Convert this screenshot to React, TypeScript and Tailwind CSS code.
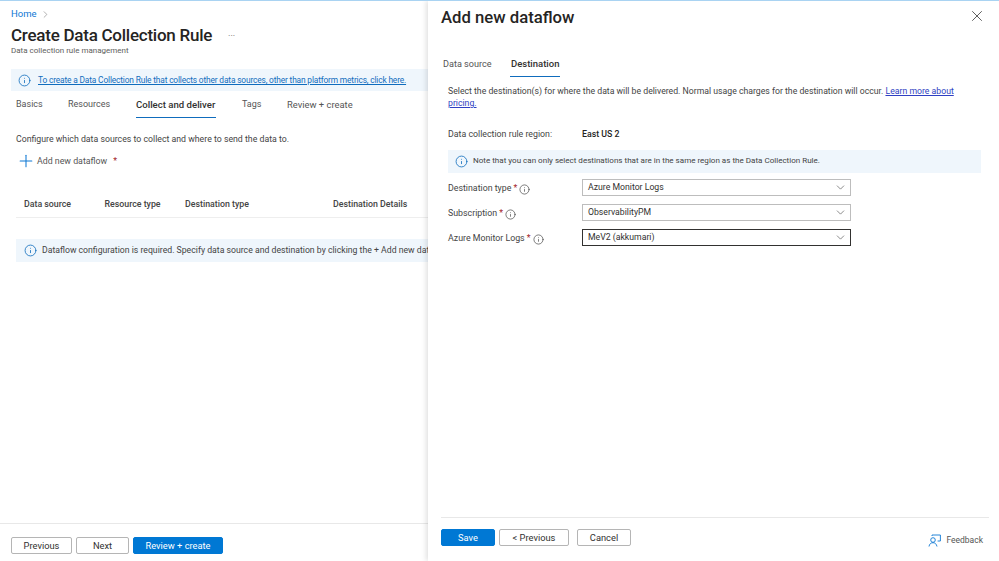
import { ChevronDown, ChevronRight, Info, Plus, X } from "lucide-react";

const fontStack = "font-['Roboto','Noto_Sans',sans-serif]";

const InfoIcon = ({ small }: { small?: boolean }) => (
	<Info
		className={small ? "size-[11px] shrink-0 text-[#444]" : "size-[13px] shrink-0 text-[#0f6cbd]"}
		strokeWidth={1.5}
	/>
);

const Req = () => <span className="text-[#a4262c]">*</span>;

const Btn = ({ label, w, primary }: { label: string; w: string; primary?: boolean }) => (
	<div
		className={`${w} h-[17px] flex items-center justify-center rounded-[2px] text-[9.3px] ${
			primary
				? "bg-[#0078d4] text-white border border-[#0078d4]"
				: "bg-white text-[#323130] border border-[#b5b5b5]"
		}`}
	>
		{label}
	</div>
);

const DropRow = ({ label, value, focused }: { label: string; value: string; focused?: boolean }) => (
	<div className="flex items-center h-[25px]">
		<div className="w-[141px] pl-[7px] flex items-center gap-[2px] text-[8.8px] text-[#444] pt-[3px]">
			<span className="whitespace-nowrap">
				{label} <Req />
			</span>
			<InfoIcon small />
		</div>
		<div
			className={`w-[269px] h-[17px] flex items-center justify-between pl-[5px] pr-[3px] text-[8.7px] text-[#323130] bg-white ${
				focused ? "border border-[#323130]" : "border border-[#bdbdbd]"
			}`}
		>
			<span>{value}</span>
			<ChevronDown className="size-[13px] text-[#555]" strokeWidth={1.25} />
		</div>
	</div>
);

export default function App() {
	return (
		<div className={`${fontStack} w-[999px] h-[561px] overflow-hidden bg-white flex border-t border-[#a9d3f2] text-[#323130]`}>
			{/* left page */}
			<div className="w-[428px] shrink-0 flex flex-col h-full">
				<div className="flex-1 min-h-0 overflow-hidden">
					<div className="pl-[11px] pt-[7px] flex items-center gap-[3px] text-[9.5px] text-[#0f78d4] h-[19px]">
						Home
						<ChevronRight className="size-[11px] text-[#777]" strokeWidth={1.25} />
					</div>
					<div className="pl-[11px] mt-[5px] flex items-center h-[21px]">
						<h1 className="text-[17px] tracking-[-0.25px] font-medium text-[#252423] whitespace-nowrap">Create Data Collection Rule</h1>
						<span className="ml-[16px] mt-[3px] text-[9px] text-[#666]">···</span>
					</div>
					<p className="pl-[11px] text-[8px] text-[#605e5c] leading-[12px] mt-[-1px]">Data collection rule management</p>
					<div className="ml-[11px] mt-[12px] h-[22px] bg-[#eff6fc] flex items-center pl-[7px] gap-[7px] overflow-hidden">
						<InfoIcon />
						<span className="text-[8.35px] tracking-[-0.15px] text-[#0f6cbd] underline whitespace-nowrap">
							To create a Data Collection Rule that collects other data sources, other than platform metrics, click here.
						</span>
					</div>
					<div className="pl-[16px] mt-[2px] flex text-[9px] h-[25px] text-[#555]">
						<div className="w-[52px] pt-[5px]">Basics</div>
						<div className="w-[68px] pt-[5px]">Resources</div>
						<div className="w-[80px] h-[25px] pt-[5px] border-b-[1.5px] border-[#0f6cbd] text-[9.6px] text-[#323130] font-medium whitespace-nowrap">Collect and deliver</div>
						<div className="ml-[26px] w-[45px] pt-[5px]">Tags</div>
						<div className="pt-[5px] whitespace-nowrap text-[9.4px]">Review + create</div>
					</div>
					<p className="pl-[16px] mt-[15px] text-[8.75px] text-[#444] whitespace-nowrap">Configure which data sources to collect and where to send the data to.</p>
					<div className="pl-[16px] mt-[5px] flex items-center gap-[1px] text-[8.8px] text-[#555] h-[20px]">
						<Plus className="size-[20px] text-[#0f78d4]" strokeWidth={1.25} />
						<span>Add new dataflow</span>
						<span className="ml-[5px] text-[#a4262c]">*</span>
					</div>
					<div className="ml-[16px] mt-[27px] h-[20px] flex text-[8.8px] font-medium text-[#444] border-b border-[#eeeeee] pl-[8px]">
						<span className="w-[80.5px]">Data source</span>
						<span className="w-[80.5px]">Resource type</span>
						<span className="w-[148px]">Destination type</span>
						<span className="whitespace-nowrap">Destination Details</span>
					</div>
					<div className="ml-[16px] mt-[21px] h-[23px] bg-[#eff6fc] flex items-center pl-[8px] gap-[5px] overflow-hidden">
						<InfoIcon />
						<span className="text-[8.7px] text-[#444] whitespace-nowrap">
							Dataflow configuration is required. Specify data source and destination by clicking the + Add new dataflow.
						</span>
					</div>
				</div>
				<div className="h-[38px] border-t border-[#e8e8e8] pl-[11px] pt-[13px] flex gap-[4px]">
					<Btn label="Previous" w="w-[61px]" />
					<Btn label="Next" w="w-[53px]" />
					<Btn label="Review + create" w="w-[90px]" primary />
				</div>
			</div>

			{/* right blade */}
			<div className="flex-1 min-w-0 h-full flex flex-col shadow-[-2px_0_5px_rgba(0,0,0,0.12)] pl-[13px] pr-[10px]">
				<div className="flex-1 min-h-0">
					<div className="flex items-start justify-between h-[31px]">
						<h2 className="text-[16.7px] font-medium text-[#252423] pt-[4px] whitespace-nowrap">Add new dataflow</h2>
						<X className="size-[18px] mt-[6px] mr-[3px] text-[#555]" strokeWidth={1.25} />
					</div>
					<div className="mt-[23px] flex h-[22px]">
						<div className="w-[69px] pl-[2px] pt-[3px] text-[9.1px] text-[#555]">Data source</div>
						<div className="w-[50px] pt-[2px] pl-px text-[9.5px] font-medium border-b-[1.5px] border-[#0f6cbd] text-[#323130]">Destination</div>
					</div>
					<p className="mt-[8px] pl-[7px] text-[8.7px] leading-[12px] text-[#444] w-[520px]">
						Select the destination(s) for where the data will be delivered. Normal usage charges for the destination will occur.{" "}
						<span className="text-[#2f3fc2] underline">Learn more about pricing.</span>
					</p>
					<div className="mt-[19px] pl-[7px] flex items-center h-[14px] text-[8.8px]">
						<span className="w-[134px] text-[#444]">Data collection rule region:</span>
						<span className="font-medium text-[#252423]">East US 2</span>
					</div>
					<div className="ml-[7px] mt-[8px] h-[23px] w-[533px] bg-[#eff6fc] flex items-center pl-[7px] gap-[5px]">
						<InfoIcon />
						<span className="text-[8.05px] text-[#444] whitespace-nowrap">Note that you can only select destinations that are in the same region as the Data Collection Rule.</span>
					</div>
					<div className="mt-[2px]">
						<DropRow label="Destination type" value="Azure Monitor Logs" />
						<DropRow label="Subscription" value="ObservabilityPM" />
						<DropRow label="Azure Monitor Logs" value="MeV2 (akkumari)" focused />
					</div>
				</div>
				<div className="h-[44px] border-t border-[#e8e8e8] flex items-start pt-[11px]">
					<Btn label="Save" w="w-[54px]" primary />
					<div className="w-[4px]" />
					<Btn label="< Previous" w="w-[70px]" />
					<div className="w-[8px]" />
					<Btn label="Cancel" w="w-[54px]" />
					<div className="ml-auto mt-[5px] mr-[6px] flex items-center gap-[5px] text-[8.5px] text-[#555]">
						<svg width="13" height="13" viewBox="0 0 13 13" fill="none" stroke="#0f78d4" strokeWidth="0.9">
							<circle cx="5" cy="6" r="2.3" />
							<path d="M1 12.5c.4-2.6 2-3.8 4-3.8s3.4 1.2 4 3.8" />
							<path d="M4 2V1h8.4v6H9.6" />
						</svg>
						Feedback
					</div>
				</div>
			</div>
		</div>
	);
}
